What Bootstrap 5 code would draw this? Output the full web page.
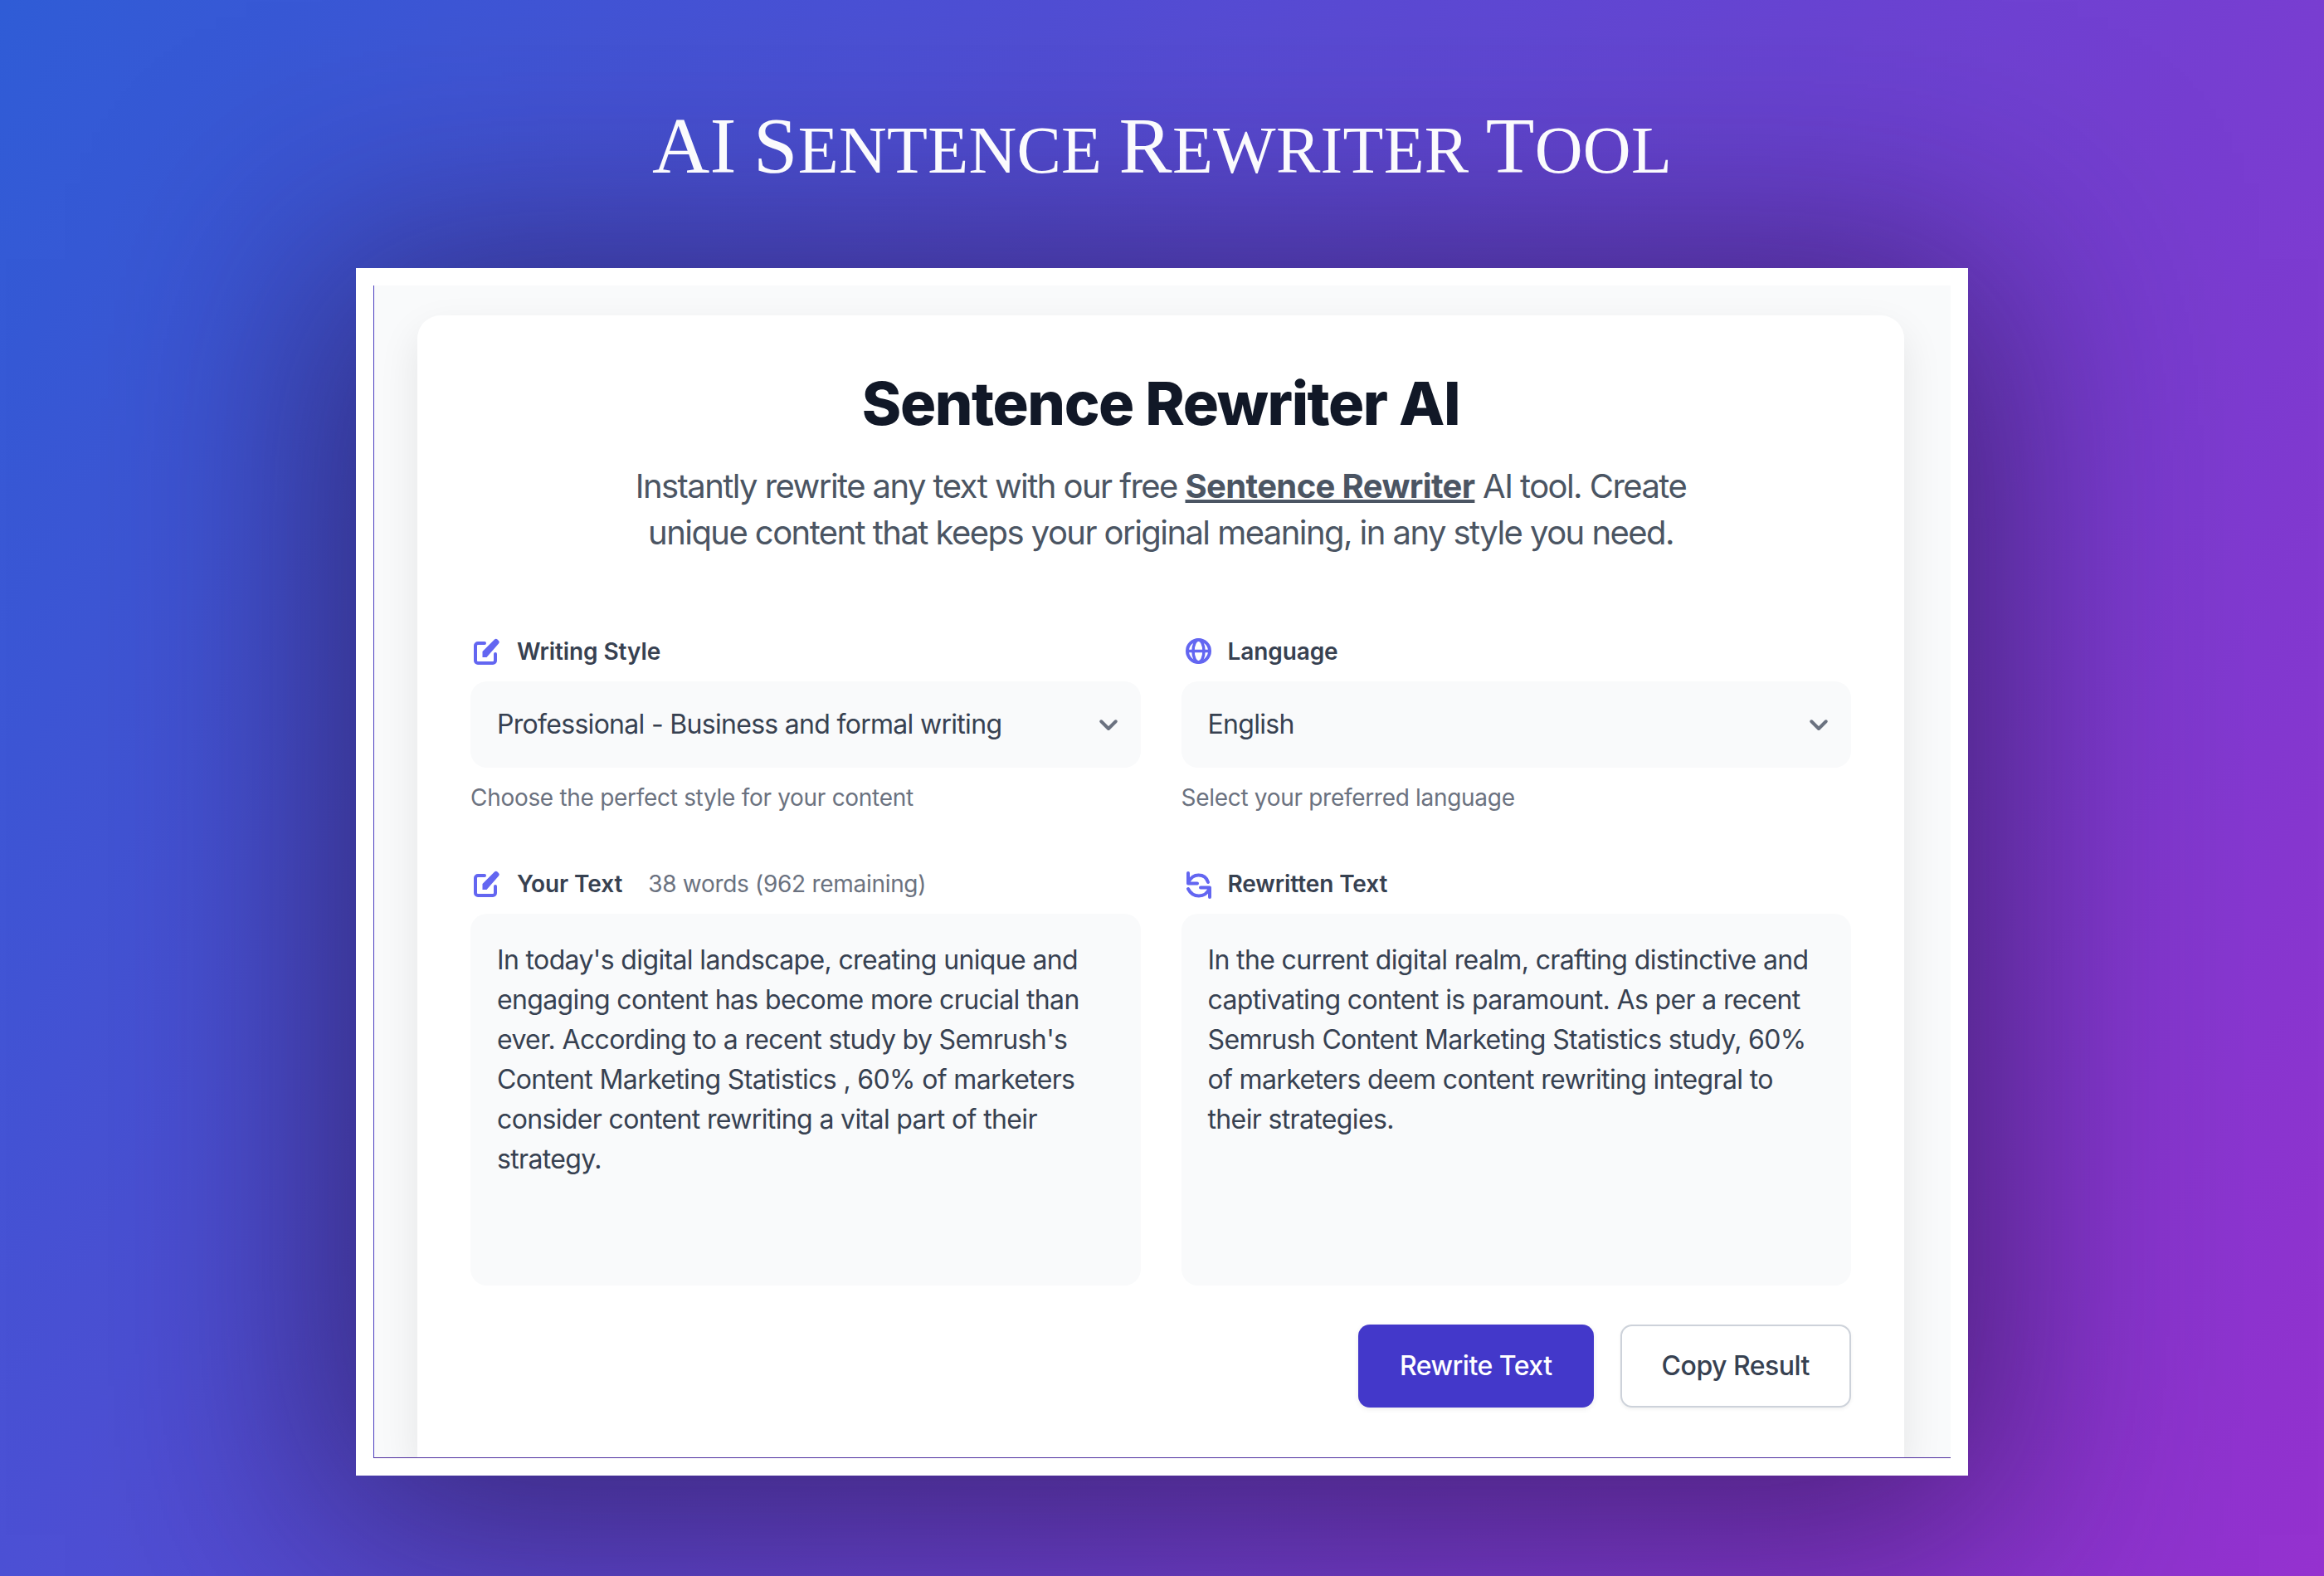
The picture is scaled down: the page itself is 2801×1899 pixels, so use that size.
<!DOCTYPE html>
<html lang="en">
<head>
<meta charset="utf-8">
<title>AI Sentence Rewriter Tool</title>
<link rel="stylesheet" href="https://cdn.jsdelivr.net/npm/bootstrap@5.3.0/dist/css/bootstrap.min.css">
<style>
html,body{height:100%}
body{margin:0;width:2801px;height:1899px;overflow:hidden;font-family:Inter,"Liberation Sans",sans-serif;background:linear-gradient(120deg,#2f5cd6 0%,#9531cf 100%);background-color:#6040d0}
.hero-title{font-family:"Liberation Serif",serif;font-weight:400;color:#fbfbfd;text-transform:uppercase;font-size:80px;line-height:110px;margin:0;padding-top:121px;height:323px;text-align:center;letter-spacing:.3px}
.hero-title .tc{font-size:96px}
.frame-box{width:1943px;height:1455px;margin-left:429px;padding:21px;background:#fff;box-shadow:0 30px 260px 40px rgba(35,15,60,.6)}
.frame-inner{height:100%;background:#f9fafb;border-left:1px solid #4a3cc0;border-bottom:1px solid #4f2f9f;padding:36px 56px 0 52px;overflow:hidden}
.tool-card{background:#fff;border-radius:28px 28px 0 0;height:100%;padding:66px 64px 0;box-shadow:0 20px 50px rgba(0,0,0,.09);color:#374151}
.tool-head{font-size:72px;line-height:80px;font-weight:800;letter-spacing:-1.4px;color:#111827;text-align:center;margin:0 0 32px}
.tool-sub{font-size:40px;line-height:56px;letter-spacing:-1.56px;color:#4b5563;text-align:center;margin:0 auto 95px;width:1340px}
.tool-sub a{color:#4b5563;font-weight:700;letter-spacing:-.63px}
.cols{display:grid;grid-template-columns:1fr 1fr;column-gap:49px}
.lab{display:flex;align-items:center;gap:17px;padding-left:3px;font-size:28px;line-height:40px;font-weight:600;letter-spacing:-.1px;color:#374151;margin-bottom:16px;height:40px}
.lab .cnt{font-weight:400;letter-spacing:-.3px;color:#6b7280;margin-left:14px}
.lab svg{width:36px;height:36px;color:#6366f1;flex:none}
.fake-select{height:104px;background:#f9fafb;border-radius:20px;font-size:32px;line-height:48px;letter-spacing:-.7px;color:#374151;display:flex;align-items:center;justify-content:space-between;padding:0 24px 0 32px}
.fake-select svg{width:30px;height:30px;color:#6b7280}
.helper{font-size:28px;line-height:40px;letter-spacing:-.3px;color:#6b7280;margin:16px 0 64px}
.fake-area{height:448px;background:#f9fafb;border-radius:20px;font-size:32px;line-height:48px;letter-spacing:-.64px;color:#374151;padding:32px}
.act{display:flex;justify-content:flex-end;gap:32px;margin-top:47px}
.act .btn{height:100px;font-size:32px;font-weight:500;letter-spacing:-.5px;border-radius:14px;padding:0 50px;display:flex;align-items:center}
.go{background:#4338ca;color:#fff;border:0;box-shadow:0 2px 6px rgba(0,0,0,.08)}
.act .cp{background:#fff;color:#374151;border:2px solid #cdd2da;padding:0 48px;box-shadow:0 2px 4px rgba(0,0,0,.06)}
</style>
</head>
<body>
<h1 class="hero-title"><span class="tc">AI</span> <span class="tc">S</span>entence <span class="tc">R</span>ewriter <span class="tc">T</span>ool</h1>
<div class="frame-box">
<div class="frame-inner">
<div class="tool-card">
<h2 class="tool-head">Sentence Rewriter AI</h2>
<p class="tool-sub">Instantly rewrite any text with our free <a href="#">Sentence Rewriter</a> AI tool. Create unique content that keeps your original meaning, in any style you need.</p>
<div class="cols">
<div>
<div class="lab"><svg viewBox="0 0 36 36" fill="none" stroke="currentColor" stroke-width="4" stroke-linecap="round" stroke-linejoin="round"><path d="M14 8H6a3 3 0 0 0-3 3v18a3 3 0 0 0 3 3h18a3 3 0 0 0 3-3v-8"/><path d="M11.500 25v-7L26 3.500a2.500 2.500 0 0 1 3.500 0l1.500 1.500a2.500 2.500 0 0 1 0 3.500L16.500 25z" fill="currentColor" stroke="none"/></svg>Writing Style</div>
<div class="fake-select"><span>Professional - Business and formal writing</span><svg viewBox="0 0 24 24" fill="none" stroke="currentColor" stroke-width="3.200" stroke-linecap="round" stroke-linejoin="round"><path d="M5 9l7 7 7-7"/></svg></div>
<div class="helper">Choose the perfect style for your content</div>
</div>
<div>
<div class="lab"><svg viewBox="0 0 36 36" fill="none" stroke="currentColor" stroke-width="4"><circle cx="17.500" cy="17.500" r="13.500"/><ellipse cx="17.500" cy="17.500" rx="6.500" ry="13.500" stroke-width="3.500"/><path d="M4 17.500h27" stroke-width="3.500"/></svg>Language</div>
<div class="fake-select"><span>English</span><svg viewBox="0 0 24 24" fill="none" stroke="currentColor" stroke-width="3.200" stroke-linecap="round" stroke-linejoin="round"><path d="M5 9l7 7 7-7"/></svg></div>
<div class="helper">Select your preferred language</div>
</div>
<div>
<div class="lab"><svg viewBox="0 0 36 36" fill="none" stroke="currentColor" stroke-width="4" stroke-linecap="round" stroke-linejoin="round"><path d="M14 8H6a3 3 0 0 0-3 3v18a3 3 0 0 0 3 3h18a3 3 0 0 0 3-3v-8"/><path d="M11.500 25v-7L26 3.500a2.500 2.500 0 0 1 3.500 0l1.500 1.500a2.500 2.500 0 0 1 0 3.500L16.500 25z" fill="currentColor" stroke="none"/></svg>Your Text<span class="cnt">38 words (962 remaining)</span></div>
<div class="fake-area">In today's digital landscape, creating unique and engaging content has become more crucial than ever. According to a recent study by Semrush's Content Marketing Statistics , 60% of marketers consider content rewriting a vital part of their strategy.</div>
</div>
<div>
<div class="lab"><svg viewBox="0 0 36 36" fill="none" stroke="currentColor" stroke-width="4" stroke-linecap="round" stroke-linejoin="round"><path d="M5 5v12.500h11"/><path d="M5.500 16C8 10.500 12.500 7.500 17.500 7.500c6 0 10 3.500 11.500 8.500"/><path d="M31 34V22.500H20"/><path d="M30.500 24c-2.500 5.500-7 8.500-12.500 8.500-6 0-10.500-3.500-13-8.500"/></svg>Rewritten Text</div>
<div class="fake-area">In the current digital realm, crafting distinctive and captivating content is paramount. As per a recent Semrush Content Marketing Statistics study, 60% of marketers deem content rewriting integral to their strategies.</div>
</div>
</div>
<div class="act"><button class="btn go" type="button">Rewrite Text</button><button class="btn cp" type="button">Copy Result</button></div>
</div>
</div>
</div>
<script src="https://cdn.jsdelivr.net/npm/bootstrap@5.3.0/dist/js/bootstrap.bundle.min.js"></script>
</body>
</html>
